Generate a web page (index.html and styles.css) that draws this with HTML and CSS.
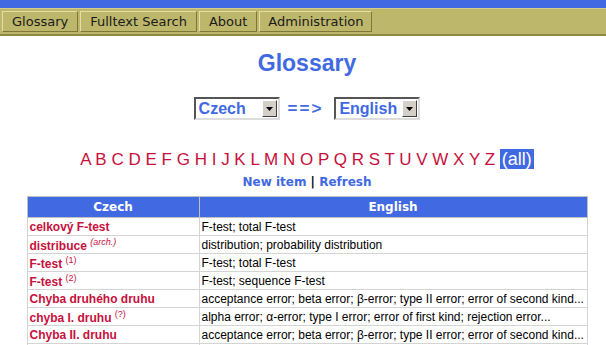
FILE: index.html
```html
<!DOCTYPE html>
<html lang="cs">
  <head>
    <meta charset="UTF-8" />
    <title>Glossary</title>
    <link rel="stylesheet" href="styles.css">
  </head>
  <body>
    <div class="topline"></div>
    <div class="menu">
      <a class="tab" href="#">Glossary</a>
      <a class="tab" href="#">Fulltext Search</a>
      <a class="tab" href="#">About</a>
      <a class="tab tab-admin" href="#">Administration</a>
    </div>
    <div class="content">
      <h1>Glossary</h1>
      <div class="langs">
        <div class="select sel-cz"><span class="value">Czech</span><span class="arrow"><svg width="7" height="4" viewBox="0 0 7 4"><path d="M0 0h7L3.5 4z" fill="#000"/></svg></span></div>
        <span class="dir">==&gt;</span>
        <div class="select sel-en"><span class="value">English</span><span class="arrow"><svg width="7" height="4" viewBox="0 0 7 4"><path d="M0 0h7L3.5 4z" fill="#000"/></svg></span></div>
      </div>
      <div class="letters">
        <a href="#">A</a> <a href="#">B</a> <a href="#">C</a> <a href="#">D</a> <a href="#">E</a> <a href="#">F</a> <a href="#">G</a> <a href="#">H</a> <a href="#">I</a> <a href="#">J</a> <a href="#">K</a> <a href="#">L</a> <a href="#">M</a> <a href="#">N</a> <a href="#">O</a> <a href="#">P</a> <a href="#">Q</a> <a href="#">R</a> <a href="#">S</a> <a href="#">T</a> <a href="#">U</a> <a href="#">V</a> <a href="#">W</a> <a href="#">X</a> <a href="#">Y</a> <a href="#">Z</a> <a href="#" class="all">(all)</a>
      </div>
      <div class="actions">
        <a href="#">New item</a> | <a href="#">Refresh</a>
      </div>
      <table class="glossary">
        <tr><th class="c1">Czech</th><th>English</th></tr>
        <tr><td class="term">celkový F-test</td><td>F-test; total F-test</td></tr>
        <tr><td class="term">distribuce <sup>(arch.)</sup></td><td>distribution; probability distribution</td></tr>
        <tr><td class="term">F-test <sup class="n">(1)</sup></td><td>F-test; total F-test</td></tr>
        <tr><td class="term">F-test <sup class="n">(2)</sup></td><td>F-test; sequence F-test</td></tr>
        <tr><td class="term">Chyba druhého druhu</td><td>acceptance error; beta error; β-error; type II error; error of second kind...</td></tr>
        <tr><td class="term">chyba I. druhu <sup class="n">(?)</sup></td><td>alpha error; α-error; type I error; error of first kind; rejection error...</td></tr>
        <tr><td class="term">Chyba II. druhu</td><td>acceptance error; beta error; β-error; type II error; error of second kind...</td></tr>
        <tr><td class="term">&nbsp;</td><td>&nbsp;</td></tr>
      </table>
    </div>
  </body>
</html>
```

FILE: styles.css
```css
body {
  margin: 0;
  background-color: white;
  font-family: "Liberation Sans", Arial, sans-serif;
}

.topline {
  height: 8px;
  background-color: #4169e1;
}

.menu {
  display: flex;
  gap: 2px;
  padding: 2px 2px 2px 2px;
  height: 21px;
  background-color: #bdb76b;
  border-top: 1px solid #d2cd8c;
  border-bottom: 2px solid #8e8940;
}

.tab {
  display: flex;
  align-items: center;
  padding: 0 9px 0 9px;
  font-family: "DejaVu Sans", Verdana, sans-serif;
  font-size: 13px;
  color: #1a1a1a;
  text-decoration: none;
  background-color: #bdb76b;
  border-top: 1px solid #e2dea6;
  border-left: 1px solid #e2dea6;
  border-right: 1px solid #7d7836;
  border-bottom: 1px solid #7d7836;
}

.tab-admin {
  padding: 0 8px 0 8px;
}

.content {
  padding-left: 8px;
}

h1 {
  margin: 13px 0 0 0;
  text-align: center;
  color: #4169e1;
  font-size: 23px;
  font-weight: bold;
  line-height: 28px;
}

.langs {
  display: flex;
  justify-content: center;
  align-items: center;
  gap: 8px;
  margin-top: 20px;
}

.select {
  display: flex;
  align-items: center;
  justify-content: space-between;
  height: 19px;
  padding: 0 1px 0 3px;
  background-color: white;
  border-top: 2px solid #555;
  border-left: 2px solid #555;
  border-right: 2px solid #ddd;
  border-bottom: 2px solid #ddd;
  color: #4169e1;
  font-weight: bold;
  font-size: 16px;
}

.sel-cz {
  width: 78px;
}

.sel-en {
  width: 78px;
}

.arrow {
  display: flex;
  align-items: center;
  justify-content: center;
  width: 13px;
  height: 15px;
  background-color: #d4d0c8;
  border-top: 1px solid #fff;
  border-left: 1px solid #fff;
  border-right: 1px solid #404040;
  border-bottom: 1px solid #404040;
}

.dir {
  color: #4169e1;
  font-weight: bold;
  font-size: 17px;
  letter-spacing: 2px;
  padding: 0 3px 0 0;
}

.letters {
  margin-top: 29px;
  text-align: center;
  font-size: 17px;
  line-height: 20px;
}

.letters a {
  color: #c8103c;
  text-decoration: none;
}

.letters a.all {
  background-color: #4169e1;
  color: white;
  padding: 0 2px;
  font-size: 18px;
}

.actions {
  margin-top: 3px;
  text-align: center;
  font-family: "DejaVu Sans", Verdana, sans-serif;
  font-size: 12px;
  font-weight: bold;
  line-height: 18px;
}

.actions a {
  color: #4169e1;
  text-decoration: none;
}

.glossary {
  width: 561px;
  margin: 5px auto 0 auto;
  table-layout: fixed;
  border-collapse: collapse;
  border: 1px solid #999;
  font-size: 12px;
}

.glossary th {
  background-color: #4169e1;
  color: white;
  font-family: "DejaVu Sans", Verdana, sans-serif;
  font-size: 12px;
  height: 20px;
  padding: 0;
  border: 1px solid #c0c0c0;
}

.glossary th.c1 {
  width: 171px;
}

.glossary td {
  height: 17px;
  padding: 0 2px;
  border: 1px solid #d4d4d4;
  white-space: nowrap;
  color: #000;
}

.glossary td.term {
  color: #c8103c;
  font-weight: bold;
  font-size: 12px;
}

.glossary sup {
  font-weight: normal;
  font-style: italic;
  font-size: 9px;
}

.glossary sup.n {
  font-style: normal;
}
```
